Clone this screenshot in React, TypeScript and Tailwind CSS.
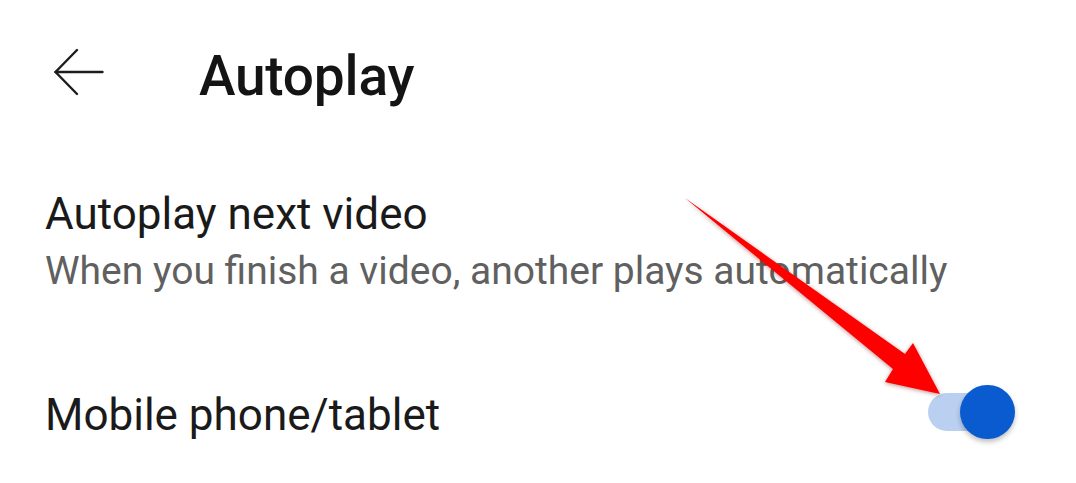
import React from 'react';

const BackArrow: React.FC = () => (
  <svg width="50" height="48" viewBox="0 0 50 48" fill="none" stroke="#1c1c1c" strokeWidth="2.4" strokeLinecap="round" strokeLinejoin="round">
    <path d="M1.5 24H48.5" />
    <path d="M23 2L1.5 24L23 46" />
  </svg>
);

const Toggle: React.FC<{ on: boolean }> = ({ on }) => (
  <div className="flex items-center h-[54px] mt-[-2px]">
    <div className={`w-[72px] h-[38px] rounded-full ${on ? 'bg-[#bad0f1]' : 'bg-[#c7c7c7]'}`} />
    <div className="ml-[-40px] w-[55px] h-[54px] rounded-full bg-[#0b5bd0] shadow-[0_3px_5px_rgba(0,0,0,0.25)]" />
  </div>
);

const App: React.FC = () => {
  return (
    <div className="relative w-[1076px] h-[483px] overflow-hidden bg-white font-['Roboto','Noto_Sans',sans-serif] text-[#1a1a1a]">
      {/* header */}
      <div className="flex items-start pt-[44px] pl-[54px]">
        <div className="mt-[4px]">
          <BackArrow />
        </div>
        <h1 className="ml-[95px] text-[55px] leading-[64px] font-medium tracking-[-0.2px] text-[#141414]">Autoplay</h1>
      </div>

      {/* autoplay next video */}
      <div className="mt-[78px] pl-[45px]">
        <div className="text-[44px] leading-[56px]">Autoplay next video</div>
        <div className="mt-[1px] text-[39px] leading-[56px] text-[#606060]">
          When you finish a video, another plays automatically
        </div>
      </div>

      {/* mobile phone / tablet */}
      <div className="mt-[88px] pl-[45px] pr-[61px] flex items-start justify-between">
        <div className="text-[44px] leading-[56px]">Mobile phone/tablet</div>
        <Toggle on />
      </div>

      {/* pointer annotation */}
      <svg
        className="absolute inset-0 pointer-events-none drop-shadow-[0_1px_2px_rgba(120,0,0,0.45)]"
        width="1076"
        height="483"
        viewBox="0 0 1076 483"
      >
        <polygon points="685,198 905,354 913,343 940,394 885,382 893,369" fill="#ff0000" />
      </svg>
    </div>
  );
};

export default App;
